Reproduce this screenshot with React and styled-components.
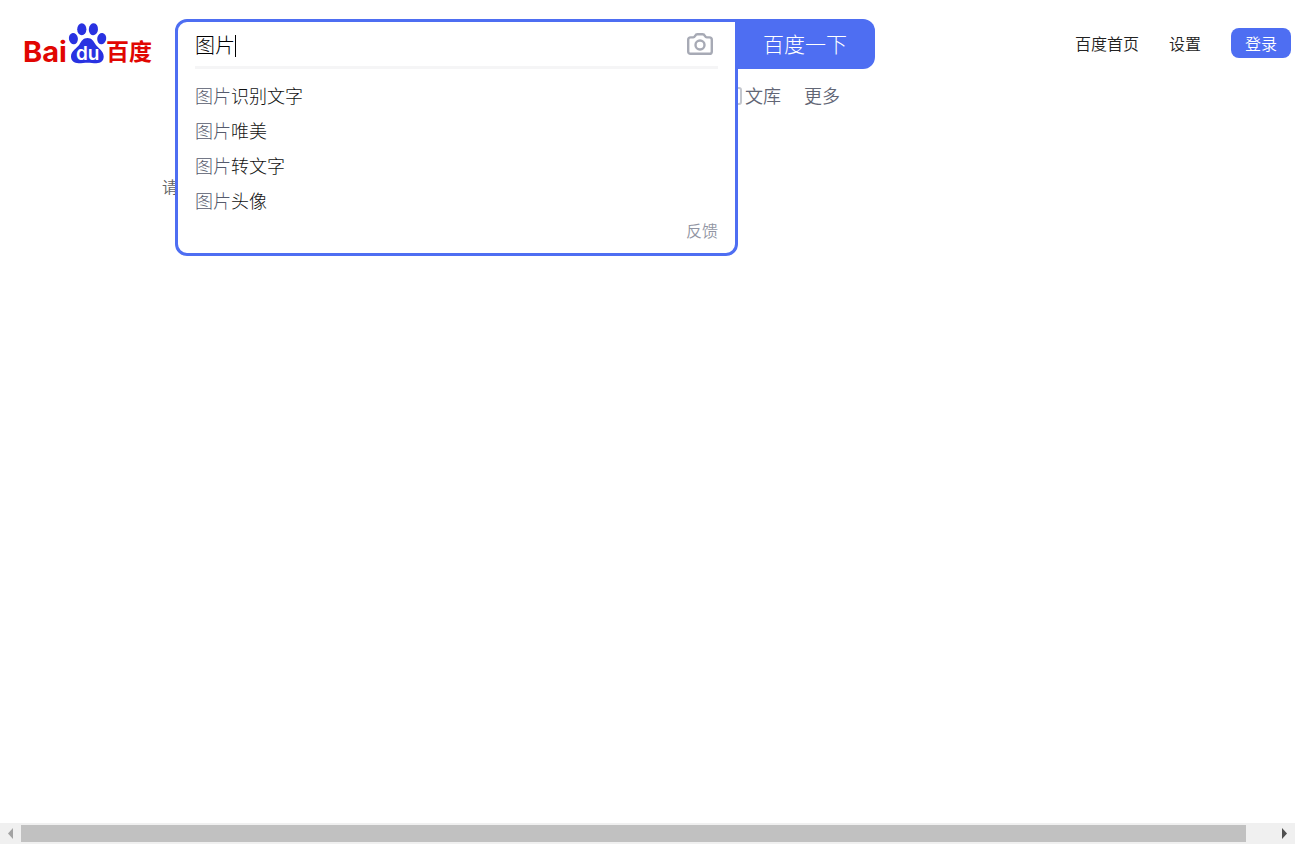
import React, { useState } from "react";
import styled, { createGlobalStyle } from "styled-components";

const blue = "#4e6ef2";

const GlobalStyle = createGlobalStyle`
  * { box-sizing: border-box; }
  body {
    margin: 0;
    background: #fff;
    color: #222;
    font-family: "Noto Sans CJK SC", "Liberation Sans", sans-serif;
    font-weight: 350;
  }
  button, input { font: inherit; }
  a { color: inherit; text-decoration: none; }
`;

const Page = styled.div`
  display: flex;
  flex-direction: column;
  min-height: 100vh;
  overflow: hidden;
`;

const Header = styled.header`
  display: flex;
  align-items: flex-start;
  padding: 19px 4px 0 20px;
`;

const LogoLink = styled.a`
  display: block;
  width: 136px;
  height: 50px;
  margin-right: 19px;
  svg { display: block; }
`;

const SearchForm = styled.form`
  position: relative;
  z-index: 1;
  display: flex;
  justify-content: flex-end;
  width: 700px;
  height: 50px;
`;

const SearchButton = styled.button`
  width: 140px;
  border: 0;
  border-radius: 0 12px 12px 0;
  background: ${blue};
  color: #fff;
  font-size: 21px;
  font-weight: 300;
  line-height: 48px;
  padding: 0 0 2px;
  cursor: pointer;
`;

const Panel = styled.div`
  position: absolute;
  top: 0;
  left: 0;
  width: 563px;
  padding: 0 17px 11px;
  border: 3px solid ${blue};
  border-radius: 12px 0 12px 12px;
  background: #fff;
`;

const InputRow = styled.div`
  position: relative;
  display: flex;
  align-items: center;
  height: 47px;
  border-bottom: 3px solid #f5f5f6;
`;

const SearchInput = styled.input`
  flex: 1;
  min-width: 0;
  height: 44px;
  padding: 0;
  border: 0;
  outline: 0;
  background: transparent;
  color: #000;
  caret-color: transparent;
  font-size: 20px;
  font-weight: 300;
`;

const Caret = styled.span`
  position: absolute;
  top: 13px;
  left: 40px;
  width: 1px;
  height: 22px;
  background: #000;
`;

const CameraButton = styled.button`
  display: flex;
  padding: 0;
  margin-right: 5px;
  border: 0;
  background: none;
  color: #a7aab5;
`;

const Suggestions = styled.ul`
  list-style: none;
  margin: 0;
  padding: 9px 0 0;
`;

const Suggestion = styled.li`
  color: #111;
  font-size: 18px;
  font-weight: 300;
  line-height: 35px;
`;

const Typed = styled.span`
  color: #555a6c;
`;

const Feedback = styled.a`
  display: block;
  color: #9195a3;
  font-size: 16px;
  line-height: 24px;
  text-align: right;
`;

const UserNav = styled.nav`
  display: flex;
  align-items: center;
  gap: 30px;
  margin-left: auto;
  padding-top: 9px;
  font-size: 16px;
  line-height: 30px;
`;

const LoginButton = styled.button`
  width: 60px;
  height: 30px;
  padding: 0;
  border: 0;
  border-radius: 8px;
  background: ${blue};
  color: #fff;
`;

const Tabs = styled.nav`
  display: flex;
  gap: 23px;
  padding: 9px 0 0 727px;
  color: #626675;
  font-size: 18px;
  line-height: 35px;
`;

const Tab = styled.a`
  display: flex;
  align-items: center;
  gap: 3px;
`;

const Notice = styled.p`
  margin: 0;
  padding: 61px 0 0 162px;
  color: #626262;
  font-size: 16px;
  line-height: 24px;
`;

const ScrollTrack = styled.div`
  display: flex;
  align-items: center;
  height: 21px;
  margin-top: auto;
  background: #f0f0f0;
`;

const Thumb = styled.div`
  flex: 1;
  height: 17px;
  margin-right: 28px;
  background: #c1c1c1;
`;

const ArrowIcon = styled.svg`
  width: 21px;
  height: 21px;
  fill: ${(p) => (p.$active ? "#505050" : "#a3a3a3")};
`;

const LogoText = styled.text`
  font-family: ${(p) =>
    p.$cjk ? '"Noto Sans CJK SC", sans-serif' : 'Inter, "Liberation Sans", sans-serif'};
  font-size: ${(p) => p.$size}px;
  font-weight: ${(p) => p.$weight || 700};
  fill: ${(p) => p.$color};
`;

function Logo() {
  return (
    <svg width="136" height="50" viewBox="-4 -4 136 50" overflow="visible" role="img" aria-label="百度">
      <LogoText x="-1" y="39" $size={29} $color="#e10602">Bai</LogoText>
      <g fill="#2932e1">
        <ellipse cx="49.4" cy="15.6" rx="4.5" ry="5.7" transform="rotate(-8 49.4 15.6)" />
        <ellipse cx="57.8" cy="6.3" rx="4.6" ry="6" />
        <ellipse cx="69.4" cy="6.3" rx="4.6" ry="6" transform="rotate(5 69.4 6.3)" />
        <ellipse cx="77.7" cy="15.6" rx="4.5" ry="5.7" transform="rotate(8 77.7 15.6)" />
        <path d="M63.5 15C59.3 15 57.4 18 55.6 21.2C53 25.3 47 27.7 47 33.6C47 38 50.2 40.3 54.6 40.3C57.8 40.3 60.6 39.7 63.5 39.7C66.4 39.7 69.2 40.3 72.4 40.3C76.8 40.3 79.7 38 79.7 33.6C79.7 27.7 74.1 25.3 71.4 21.2C69.5 18 67.7 15 63.5 15Z" />
      </g>
      <LogoText x="52" y="37" $size={19} $weight={600} $color="#fff">du</LogoText>
      <LogoText x="82" y="37" $size={23} $cjk $color="#e10602">百度</LogoText>
    </svg>
  );
}

function CameraIcon() {
  return (
    <svg width="26" height="22" viewBox="0 0 26 22" fill="none" stroke="currentColor" strokeWidth="2.4">
      <path d="M3.6 4.4H6.2C7.2 4.4 7.6 3.8 8.1 2.9C8.7 1.6 9.3 1.2 10.4 1.2H15.6C16.7 1.2 17.3 1.6 17.9 2.9C18.4 3.8 18.8 4.4 19.8 4.4H22.4C24 4.4 24.8 5.2 24.8 6.7V18.4C24.8 20 24 20.8 22.4 20.8H3.6C2 20.8 1.2 20 1.2 18.4V6.7C1.2 5.2 2 4.4 3.6 4.4Z" />
      <circle cx="13" cy="12" r="4.5" />
    </svg>
  );
}

function DocIcon() {
  return (
    <svg width="15" height="18" viewBox="0 0 15 18" fill="none" stroke="#c4c7ce" strokeWidth="2">
      <rect x="1" y="1" width="13" height="16" rx="2" />
    </svg>
  );
}

const endings = ["识别文字", "唯美", "转文字", "头像"];

export default function App() {
  const [query, setQuery] = useState("图片");

  return (
    <Page>
      <GlobalStyle />
      <Header>
        <LogoLink href="#home"><Logo /></LogoLink>
        <SearchForm onSubmit={(e) => e.preventDefault()}>
          <Panel>
            <InputRow>
              <SearchInput
                type="text"
                aria-label="百度一下"
                value={query}
                onChange={(e) => setQuery(e.target.value)}
              />
              <Caret />
              <CameraButton type="button" aria-label="图片"><CameraIcon /></CameraButton>
            </InputRow>
            <Suggestions>
              {endings.map((ending) => (
                <Suggestion key={ending}>
                  <a href="#search"><Typed>图片</Typed>{ending}</a>
                </Suggestion>
              ))}
            </Suggestions>
            <Feedback href="#feedback">反馈</Feedback>
          </Panel>
          <SearchButton type="submit">百度一下</SearchButton>
        </SearchForm>
        <UserNav>
          <a href="#home">百度首页</a>
          <a href="#settings">设置</a>
          <LoginButton type="button">登录</LoginButton>
        </UserNav>
      </Header>
      <Tabs>
        <Tab href="#wenku"><DocIcon />文库</Tab>
        <Tab href="#more">更多</Tab>
      </Tabs>
      <Notice>请</Notice>
      <ScrollTrack aria-hidden="true">
        <ArrowIcon viewBox="0 0 21 21"><path d="M13 5V16L8 10.5Z" /></ArrowIcon>
        <Thumb />
        <ArrowIcon $active viewBox="0 0 21 21"><path d="M8 5V16L13 10.5Z" /></ArrowIcon>
      </ScrollTrack>
    </Page>
  );
}
